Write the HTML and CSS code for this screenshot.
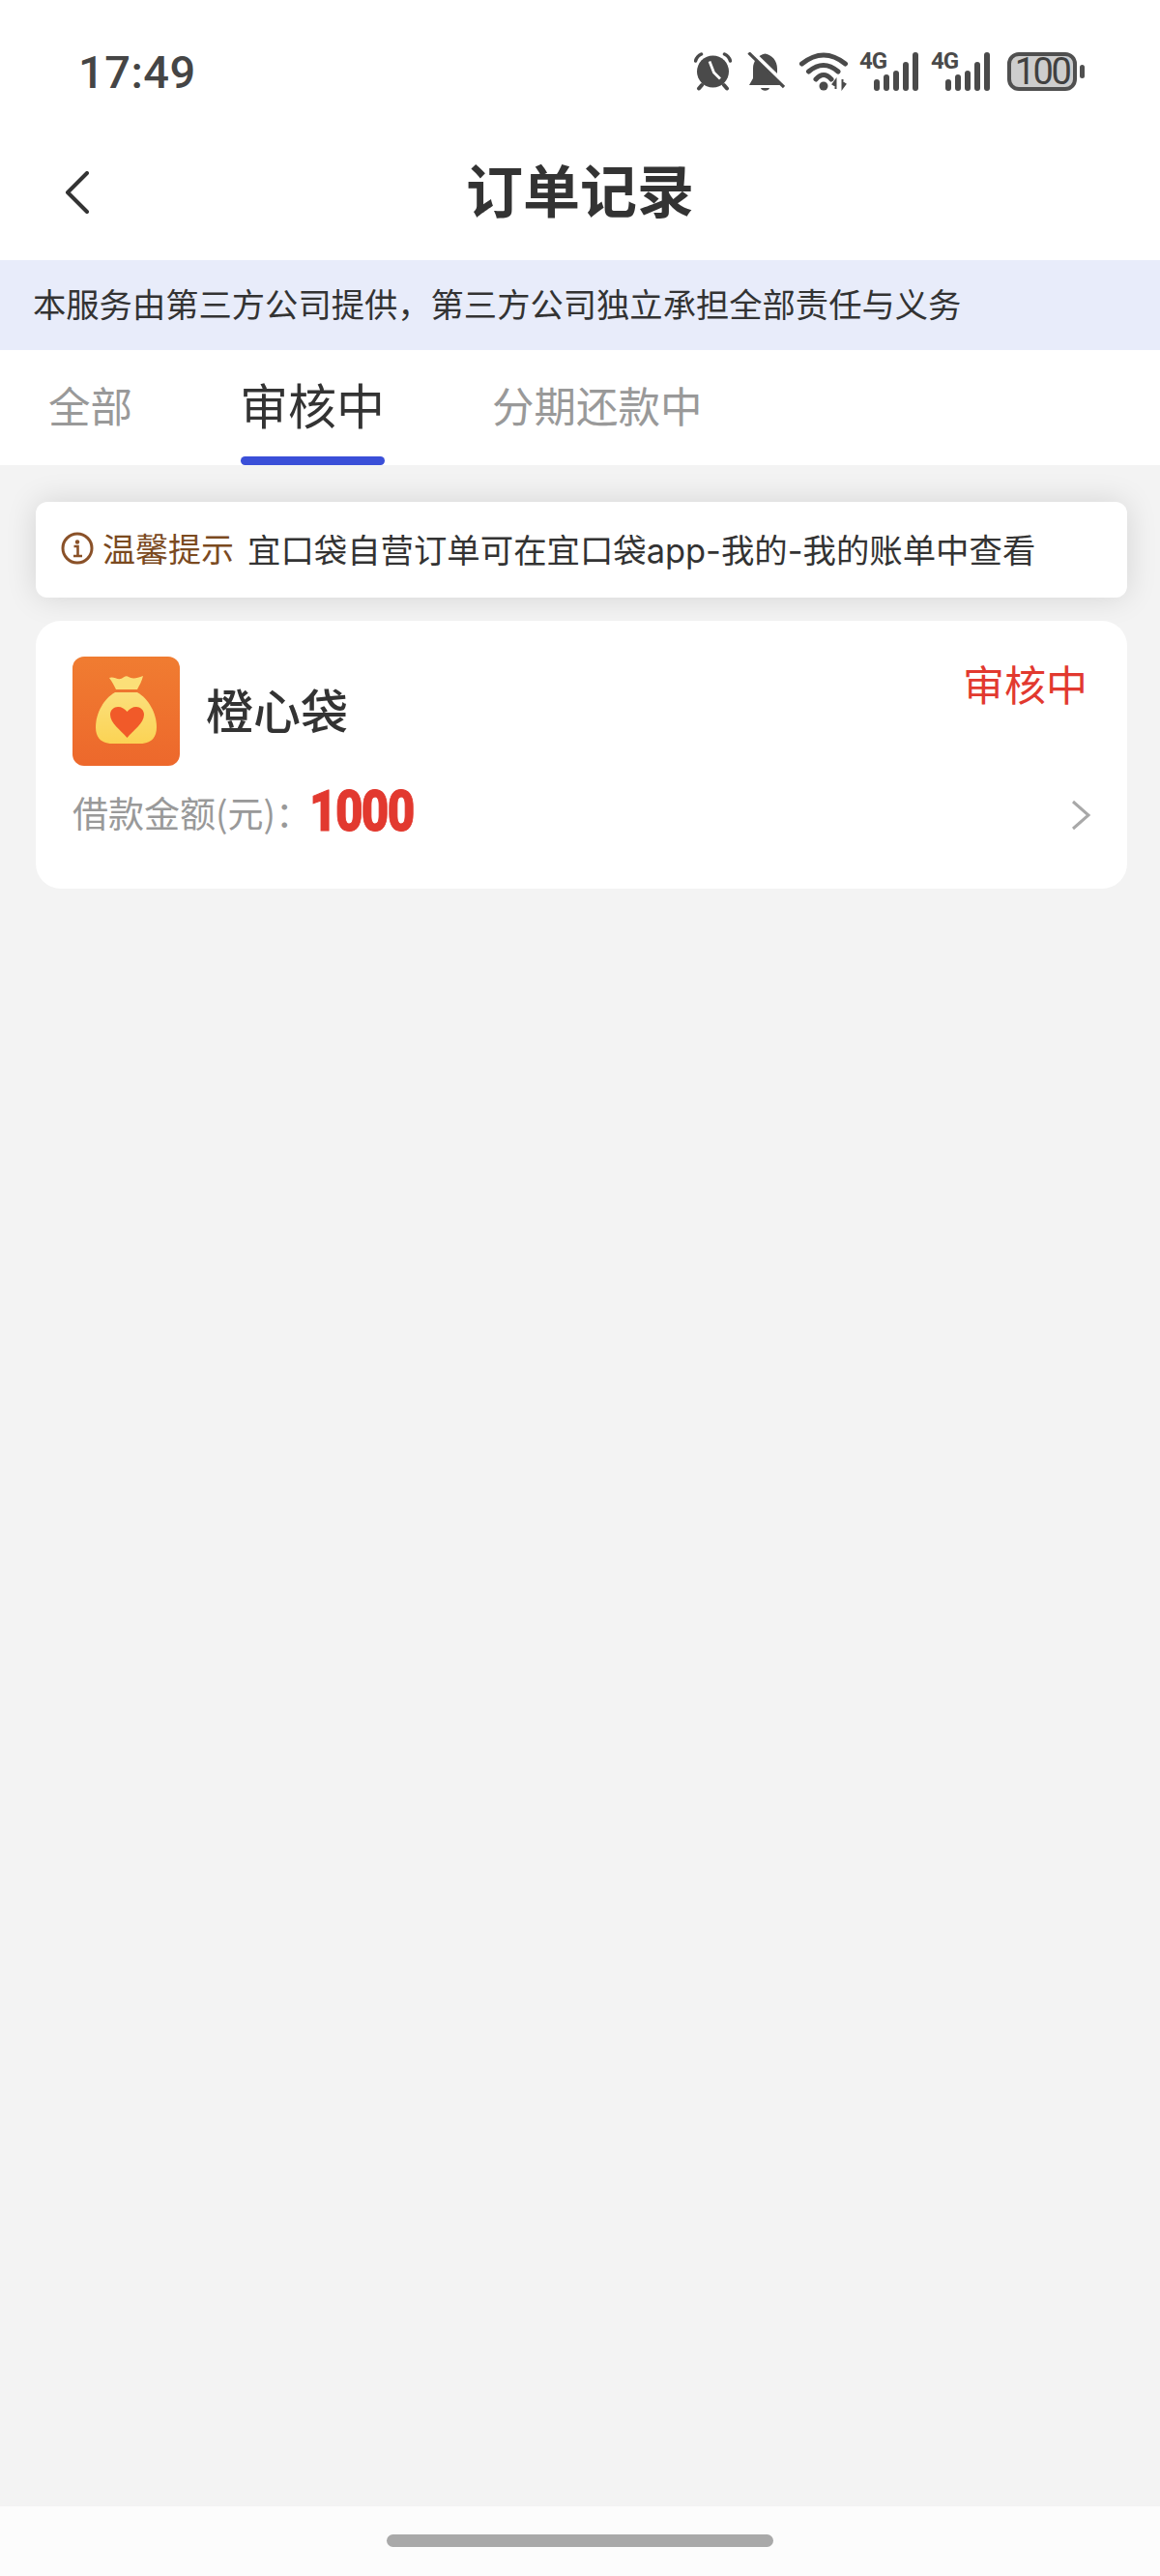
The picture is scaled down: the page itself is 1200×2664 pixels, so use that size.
FILE: index.html
```html
<!DOCTYPE html>
<html lang="zh-CN">
<head>
    <meta charset="UTF-8">
    <meta name="viewport" content="width=device-width, initial-scale=1.0">
    <title>订单记录</title>
    <link rel="stylesheet" href="styles.css">
</head>
<body>
    <div class="status-bar">
        <span class="time">17:49</span>
        <div class="status-icons">
            <!-- alarm -->
            <svg class="ico-alarm" width="39" height="40" viewBox="0 0 39 40">
                <circle cx="19.5" cy="20" r="16.5" fill="#4a4a4a"/>
                <path d="M1.5 9Q3 4 7.500 2M37.500 9Q36 4 31.500 2" fill="none" stroke="#4a4a4a" stroke-width="3.500" stroke-linecap="round"/>
                <path d="M5 37.500L8 34M34 37.500L31 34" fill="none" stroke="#4a4a4a" stroke-width="4" stroke-linecap="round"/>
                <path d="M16 9.500L20.500 21L27 27.500" fill="none" stroke="#fff" stroke-width="2.800"/>
            </svg>
            <!-- muted bell -->
            <svg class="ico-bell" width="39" height="41" viewBox="0 0 39 41">
                <path d="M18.500 1.500C26 3 31 9 31 17V27L35 34H2L6 27V17C6 9 11 3 18.500 1.500Z" fill="#4a4a4a"/>
                <path d="M14 37H23C22 40.500 15 40.500 14 37Z" fill="#4a4a4a"/>
                <path d="M3 -1L40 35" stroke="#fff" stroke-width="6"/>
                <path d="M1.500 0.500L38 36" stroke="#4a4a4a" stroke-width="3.200"/>
            </svg>
            <!-- wifi -->
            <svg class="ico-wifi" width="51" height="40" viewBox="0 0 51 40">
                <path d="M2.500 12Q25 -6 47.500 12M9.500 20Q25 7 40 20M17 28Q25 19 33 28" fill="none" stroke="#4a4a4a" stroke-width="5" stroke-linecap="round"/>
                <circle cx="25" cy="35" r="4.500" fill="#4a4a4a"/>
                <path d="M37.500 38V29M34.500 33L37.500 29V35ZM44.500 28V37M47.500 33L44.500 37V31Z" fill="#4a4a4a" stroke="#4a4a4a" stroke-width="2"/>
            </svg>
            <!-- sim 1 -->
            <div class="signal">
                <span class="signal-label">4G</span>
                <svg width="62" height="41" viewBox="0 0 62 41">
                    <rect x="15" y="28" width="6" height="12" rx="3"/>
                    <rect x="25" y="23" width="6" height="17" rx="3"/>
                    <rect x="35" y="19" width="6" height="21" rx="3"/>
                    <rect x="45" y="10" width="6" height="30" rx="3"/>
                    <rect x="55" y="0" width="6" height="40" rx="3"/>
                </svg>
            </div>
            <!-- sim 2 -->
            <div class="signal">
                <span class="signal-label">4G</span>
                <svg width="62" height="41" viewBox="0 0 62 41">
                    <rect x="15" y="28" width="6" height="12" rx="3"/>
                    <rect x="25" y="23" width="6" height="17" rx="3"/>
                    <rect x="35" y="19" width="6" height="21" rx="3"/>
                    <rect x="45" y="10" width="6" height="30" rx="3"/>
                    <rect x="55" y="0" width="6" height="40" rx="3"/>
                </svg>
            </div>
            <div class="battery">
                <div class="battery-body">100</div>
                <div class="battery-nub"></div>
            </div>
        </div>
    </div>

    <div class="nav">
        <svg class="back" width="25" height="44" viewBox="0 0 25 44">
            <path d="M23 2L3 22L23 42" fill="none" stroke="#333" stroke-width="4" stroke-linecap="round" stroke-linejoin="round"/>
        </svg>
        <h1 class="nav-title">订单记录</h1>
    </div>

    <div class="banner">本服务由第三方公司提供，第三方公司独立承担全部责任与义务</div>

    <div class="tabs">
        <div class="tab">全部</div>
        <div class="tab active">审核中</div>
        <div class="tab">分期还款中</div>
    </div>

    <div class="content">
        <div class="notice">
            <svg class="notice-icon" width="34" height="34" viewBox="0 0 34 34">
                <circle cx="17" cy="17" r="15" fill="none" stroke="#8a5128" stroke-width="3"/>
                <circle cx="17" cy="10.500" r="2.200" fill="#8a5128"/>
                <path d="M13.500 15H17.500V24M13 25H22" fill="none" stroke="#8a5128" stroke-width="2.600"/>
            </svg>
            <span class="notice-label">温馨提示</span>
            <span class="notice-text">宜口袋自营订单可在宜口袋app-我的-我的账单中查看</span>
        </div>

        <div class="card">
            <div class="card-head">
                <svg class="logo" width="111" height="113" viewBox="0 0 111 113">
                    <defs>
                        <linearGradient id="logoBg" x1="0" y1="0" x2="0" y2="1">
                            <stop offset="0" stop-color="#f07c31"/>
                            <stop offset="1" stop-color="#ed682c"/>
                        </linearGradient>
                        <linearGradient id="bagFill" x1="0" y1="0" x2="0" y2="1">
                            <stop offset="0" stop-color="#fbe07c"/>
                            <stop offset="1" stop-color="#fbd354"/>
                        </linearGradient>
                    </defs>
                    <rect width="111" height="113" rx="12" fill="url(#logoBg)"/>
                    <path d="M38 22C42 20 46 24 50 23C53 22 55 19 58 21C61 23 66 23 73 20C72 25 69 30 67 34H45C43 30 41 26 38 22Z" fill="#fbdf78"/>
                    <path d="M44 37H67C78 43 87 58 87 73C87 85 80 90 70 90H41C31 90 24 85 24 73C24 58 33 43 44 37Z" fill="url(#bagFill)"/>
                    <path d="M56.500 84C50 76 39 69 39 60C39 55 43 52 47 52C51 52 54 54 56.500 57C59 54 62 52 66 52C70 52 74 55 74 60C74 69 63 76 56.500 84Z" fill="#f15a29"/>
                </svg>
                <span class="card-name">橙心袋</span>
                <span class="card-status">审核中</span>
            </div>
            <div class="card-amount">
                <span class="amount-label">借款金额(元)：</span>
                <span class="amount-value">1000</span>
                <svg class="arrow" width="21" height="32" viewBox="0 0 21 32">
                    <path d="M2 2L18 16L2 30" fill="none" stroke="#a8a8a8" stroke-width="3"/>
                </svg>
            </div>
        </div>
    </div>

    <div class="home-bar">
        <div class="home-pill"></div>
    </div>
</body>
</html>
```

FILE: styles.css
```css
* {
    box-sizing: border-box;
}
body {
    margin: 0;
    height: 2664px;
    display: flex;
    flex-direction: column;
    background: #fff;
    color: #333;
    font-family: "Noto Sans CJK SC", Roboto, sans-serif;
    overflow: hidden;
}

/* status bar */
.status-bar {
    height: 130px;
    flex-shrink: 0;
    padding: 18px 78px 0 81px;
    display: flex;
    align-items: center;
    justify-content: space-between;
}
.time {
    font-family: Roboto, sans-serif;
    font-size: 47px;
    font-weight: 500;
    letter-spacing: 0.5px;
    color: #454545;
}
.status-icons {
    display: flex;
    align-items: center;
}
.status-icons svg {
    display: block;
}
.ico-alarm {
    margin-right: 16px;
}
.ico-bell {
    margin-right: 15px;
}
.ico-wifi {
    margin-right: 11px;
}
.signal {
    position: relative;
    margin-right: 12px;
    fill: #4a4a4a;
}
.signal + .battery {
    margin-left: 5px;
}
.signal-label {
    position: absolute;
    left: 0;
    top: 0;
    font-family: Roboto, sans-serif;
    font-size: 24px;
    font-weight: 700;
    line-height: 19px;
    letter-spacing: -1px;
    color: #4a4a4a;
}
.battery {
    display: flex;
    align-items: center;
    gap: 3px;
}
.battery-body {
    width: 72px;
    height: 40px;
    border: 4px solid #505050;
    border-radius: 12px;
    background: #cdcdcd;
    color: #404040;
    font-family: Roboto, sans-serif;
    font-size: 38px;
    line-height: 32px;
    letter-spacing: -2.500px;
    text-align: center;
}
.battery-nub {
    width: 5px;
    height: 14px;
    border-radius: 3px;
    background: #505050;
}

/* title bar */
.nav {
    height: 139px;
    flex-shrink: 0;
    position: relative;
    padding-bottom: 10px;
    display: flex;
    align-items: center;
    justify-content: center;
}
.back {
    position: absolute;
    left: 67px;
    top: 47px;
}
.nav-title {
    margin: 0;
    font-size: 59px;
    font-weight: 700;
    color: #333;
}

.banner {
    height: 93px;
    flex-shrink: 0;
    padding: 0 0 6px 34px;
    display: flex;
    align-items: center;
    background: #e8ecfa;
    font-size: 34.300px;
    color: #333;
}

/* tabs */
.tabs {
    height: 119px;
    flex-shrink: 0;
    padding: 0 0 6px 50px;
    display: flex;
    align-items: center;
    gap: 111px;
    background: #fff;
}
.tab {
    position: relative;
    font-size: 43.500px;
    color: #999;
}
.tab.active {
    font-size: 50px;
    color: #333;
    top: -2px;
}
.tab.active::after {
    content: "";
    position: absolute;
    left: 1px;
    right: 0;
    bottom: -28px;
    height: 9px;
    border-radius: 5px;
    background: #3a4fd8;
}

/* content */
.content {
    flex: 1;
    padding: 38px 34px 0 37px;
    background: #f3f3f3;
}
.notice {
    height: 99px;
    padding: 0 0 4px 26px;
    display: flex;
    align-items: center;
    background: #fff;
    border-radius: 12px;
    box-shadow: 0 0 32px rgba(0, 0, 0, 0.13);
    font-size: 34px;
}
.notice-icon {
    margin-right: 9px;
    flex-shrink: 0;
}
.notice-label {
    margin-right: 14px;
    color: #7b4a1f;
}
.notice-text {
    font-family: Inter, "Noto Sans CJK SC", sans-serif;
    font-size: 34.400px;
    color: #333;
}

.card {
    position: relative;
    height: 277px;
    margin-top: 24px;
    padding: 37px 41px 0 38px;
    background: #fff;
    border-radius: 26px;
}
.card-head {
    display: flex;
    align-items: center;
}
.logo {
    display: block;
    flex-shrink: 0;
}
.card-name {
    margin-left: 27px;
    padding-bottom: 6px;
    font-size: 49px;
    font-weight: 500;
    color: #333;
}
.card-status {
    margin-left: auto;
    align-self: flex-start;
    font-size: 43px;
    line-height: 55px;
    color: #e2392f;
}
.card-amount {
    height: 50px;
    margin-top: 23px;
    display: flex;
    align-items: center;
}
.amount-label {
    font-size: 37px;
    color: #999;
}
.amount-value {
    margin-left: -2px;
    padding-bottom: 4px;
    font-family: Roboto, sans-serif;
    font-size: 60px;
    font-weight: 900;
    letter-spacing: -2px;
    -webkit-text-stroke: 1px #e2392f;
    color: #e2392f;
    transform: scaleX(0.82);
    transform-origin: left center;
}
.arrow {
    margin-left: auto;
    margin-right: -4px;
    margin-top: 6px;
}

/* gesture bar */
.home-bar {
    height: 72px;
    flex-shrink: 0;
    display: flex;
    justify-content: center;
    padding-top: 29px;
    background: #fcfcfc;
}
.home-pill {
    width: 400px;
    height: 13px;
    border-radius: 7px;
    background: #a9a9a9;
}
```
